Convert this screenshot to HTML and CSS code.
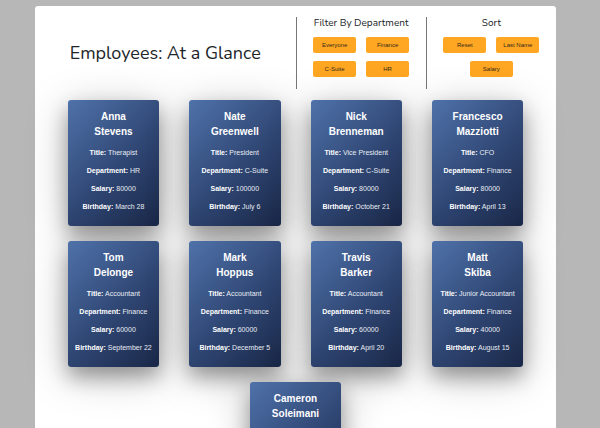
FILE: index.html
```html
<!DOCTYPE html>
<html lang="en">
<head>
<meta charset="utf-8">
<meta name="viewport" content="width=device-width, initial-scale=1">
<title>Employees: At a Glance</title>
<link rel="stylesheet" href="styles.css">
</head>
<body>
<main class="panel">
  <header class="header">
    <h1 class="title">Employees: At a Glance</h1>
    <section class="controls">
      <h2 class="controls-title">Filter By Department</h2>
      <div class="buttons">
        <button class="button" type="button">Everyone</button>
        <button class="button" type="button">Finance</button>
        <button class="button" type="button">C-Suite</button>
        <button class="button" type="button">HR</button>
      </div>
    </section>
    <section class="controls">
      <h2 class="controls-title">Sort</h2>
      <div class="buttons">
        <button class="button" type="button">Reset</button>
        <button class="button" type="button">Last Name</button>
        <button class="button" type="button">Salary</button>
      </div>
    </section>
  </header>
  <div class="cards">
    <article class="card">
      <h3 class="name">Anna<br>Stevens</h3>
      <p class="detail"><b>Title:</b> Therapist</p>
      <p class="detail"><b>Department:</b> HR</p>
      <p class="detail"><b>Salary:</b> 80000</p>
      <p class="detail"><b>Birthday:</b> March 28</p>
    </article>
    <article class="card">
      <h3 class="name">Nate<br>Greenwell</h3>
      <p class="detail"><b>Title:</b> President</p>
      <p class="detail"><b>Department:</b> C-Suite</p>
      <p class="detail"><b>Salary:</b> 100000</p>
      <p class="detail"><b>Birthday:</b> July 6</p>
    </article>
    <article class="card">
      <h3 class="name">Nick<br>Brenneman</h3>
      <p class="detail"><b>Title:</b> Vice President</p>
      <p class="detail"><b>Department:</b> C-Suite</p>
      <p class="detail"><b>Salary:</b> 80000</p>
      <p class="detail"><b>Birthday:</b> October 21</p>
    </article>
    <article class="card">
      <h3 class="name">Francesco<br>Mazziotti</h3>
      <p class="detail"><b>Title:</b> CFO</p>
      <p class="detail"><b>Department:</b> Finance</p>
      <p class="detail"><b>Salary:</b> 80000</p>
      <p class="detail"><b>Birthday:</b> April 13</p>
    </article>
    <article class="card">
      <h3 class="name">Tom<br>Delonge</h3>
      <p class="detail"><b>Title:</b> Accountant</p>
      <p class="detail"><b>Department:</b> Finance</p>
      <p class="detail"><b>Salary:</b> 60000</p>
      <p class="detail"><b>Birthday:</b> September 22</p>
    </article>
    <article class="card">
      <h3 class="name">Mark<br>Hoppus</h3>
      <p class="detail"><b>Title:</b> Accountant</p>
      <p class="detail"><b>Department:</b> Finance</p>
      <p class="detail"><b>Salary:</b> 60000</p>
      <p class="detail"><b>Birthday:</b> December 5</p>
    </article>
    <article class="card">
      <h3 class="name">Travis<br>Barker</h3>
      <p class="detail"><b>Title:</b> Accountant</p>
      <p class="detail"><b>Department:</b> Finance</p>
      <p class="detail"><b>Salary:</b> 60000</p>
      <p class="detail"><b>Birthday:</b> April 20</p>
    </article>
    <article class="card">
      <h3 class="name">Matt<br>Skiba</h3>
      <p class="detail"><b>Title:</b> Junior Accountant</p>
      <p class="detail"><b>Department:</b> Finance</p>
      <p class="detail"><b>Salary:</b> 40000</p>
      <p class="detail"><b>Birthday:</b> August 15</p>
    </article>
    <article class="card">
      <h3 class="name">Cameron<br>Soleimani</h3>
    </article>
  </div>
</main>
</body>
</html>
```
FILE: styles.css
```css
* {
  box-sizing: border-box;
}

html {
  height: 100%;
  overflow: hidden;
}

body {
  display: flex;
  min-height: 100%;
  margin: 0;
  padding: 6px 44px 0 35px;
  background: #b7b7b7;
  font-family: "Liberation Sans", Arial, sans-serif;
}

h1,
h2,
h3,
p {
  margin: 0;
}

.panel {
  flex: 1;
  padding-top: 11px;
  border-radius: 3px 3px 0 0;
  background: #fff;
}

.header {
  display: grid;
  grid-template-columns: 2fr 1fr 1fr;
  color: #212529;
  text-align: center;
}

.title,
.controls-title {
  font-family: Nunito, Lato, sans-serif;
  font-weight: 400;
}

.title {
  align-self: center;
  font-size: 18px;
  line-height: 24px;
}

.controls {
  min-height: 72px;
  border-left: 1px solid #75787b;
}

.controls-title {
  font-size: 10px;
  line-height: 12px;
}

.buttons {
  display: flex;
  flex-wrap: wrap;
  justify-content: center;
  gap: 8px 10px;
  padding: 8px 12px 0;
}

.button {
  width: 43px;
  height: 16px;
  padding: 0;
  border: 0;
  border-radius: 2px;
  background: #ffa722;
  color: #33291a;
  font-family: inherit;
  font-size: 6px;
  line-height: 16px;
}

.cards {
  display: flex;
  flex-wrap: wrap;
  justify-content: center;
  gap: 15px 30px;
  padding: 11px 32px 0;
}

.card {
  width: 20%;
  min-height: 126px;
  padding: 9px 0 13px;
  border-radius: 3px;
  background: linear-gradient(135deg, #4f72aa, #2f4673 55%, #1a2848);
  box-shadow: 0 10px 19px rgba(0, 0, 0, 0.3), 0 8px 42px rgba(0, 0, 0, 0.26);
  color: #fff;
  text-align: center;
}

.name {
  font-size: 10px;
  font-weight: 700;
  line-height: 15px;
}

.detail {
  margin-top: 8px;
  color: #e8ecf4;
  font-size: 7px;
  line-height: 10px;
  white-space: nowrap;
}

.name + .detail {
  margin-top: 9px;
}

.detail b {
  color: #fff;
}
```
